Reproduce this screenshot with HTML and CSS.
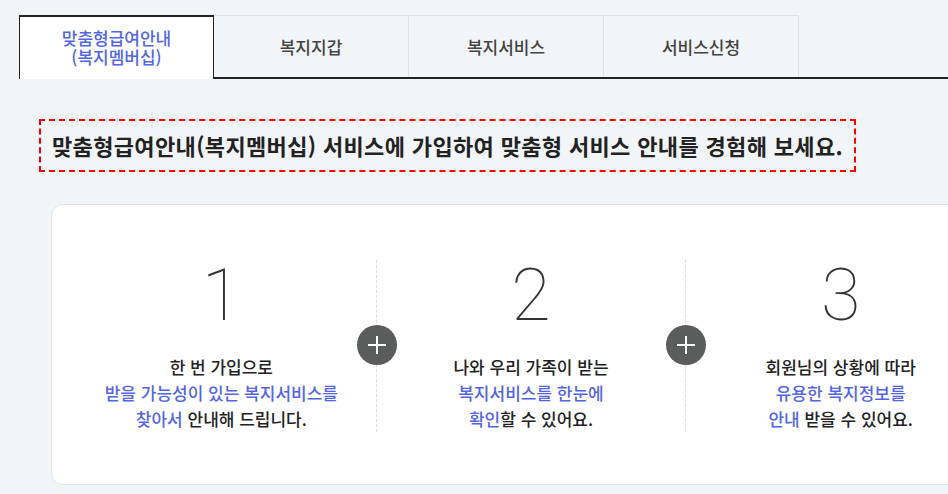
FILE: index.html
```html
<!DOCTYPE html>
<html lang="ko">

<head>
    <meta name="viewport" content="width=device-width, initial-scale=1.0">
    <title>맞춤형급여안내</title>
    <link rel="stylesheet" href="styles.css">
</head>
<body>

    <!-- Tabs -->
    <ul class="tabs">
        <li class="tab active"><a href="#">맞춤형급여안내<br>(복지멤버십)</a></li>
        <li class="tab"><a href="#">복지지갑</a></li>
        <li class="tab"><a href="#">복지서비스</a></li>
        <li class="tab"><a href="#">서비스신청</a></li>
    </ul>

    <!-- Title -->
    <h2 class="title">맞춤형급여안내(복지멤버십) 서비스에 가입하여 맞춤형 서비스 안내를 경험해 보세요.</h2>

    <!-- Steps -->
    <div class="card">
        <div class="step">
            <p class="num">1</p>
            <p class="desc">한 번 가입으로<br><em>받을 가능성이 있는 복지서비스를</em><br><em>찾아서</em> 안내해 드립니다.</p>
            <span class="plus"></span>
        </div>
        <div class="step">
            <p class="num">2</p>
            <p class="desc">나와 우리 가족이 받는<br><em>복지서비스를 한눈에</em><br><em>확인</em>할 수 있어요.</p>
            <span class="plus"></span>
        </div>
        <div class="step">
            <p class="num">3</p>
            <p class="desc">회원님의 상황에 따라<br><em>유용한 복지정보를</em><br><em>안내</em> 받을 수 있어요.</p>
        </div>
    </div>

</body>

</html>
```

FILE: styles.css
```css
/* General */
body {
    margin: 0;
    background-color: #f2f5f7;
    font-family: "Noto Sans CJK KR", "Noto Sans", sans-serif;
    color: #222;
    overflow: hidden;
}

/* Tabs */
.tabs {
    display: flex;
    list-style: none;
    margin: 15px 0 0 19px;
    padding: 0;
    border-bottom: 2px solid #222;
}

.tab {
    width: 195px;
    height: 62px;
    box-sizing: border-box;
    border-top: 1px solid #dde1e4;
    border-right: 1px solid #dde1e4;
    display: flex;
    align-items: center;
    justify-content: center;
    text-align: center;
}

.tab a {
    color: #444;
    text-decoration: none;
    font-size: 17px;
    font-weight: 500;
    line-height: 20px;
}

.tab.active {
    height: 64px;
    margin-bottom: -2px;
    background-color: #fff;
    border: 1px solid #222;
    border-top-width: 2px;
    border-bottom: none;
    padding-bottom: 2px;
}

.tab.active a {
    color: #5266e4;
    line-height: 19px;
}

/* Title */
.title {
    display: inline-block;
    margin: 40px 0 0 39px;
    padding: 0 11px;
    border: 2px dashed #ff0000;
    font-size: 22px;
    font-weight: 700;
    letter-spacing: 0.35px;
    line-height: 49px;
    color: #222;
    white-space: nowrap;
}

/* Card */
.card {
    display: flex;
    width: 960px;
    box-sizing: border-box;
    margin: 32px 0 0 51px;
    padding: 55px 15px 52px;
    background-color: #fff;
    border: 1px solid #e1e4e6;
    border-radius: 12px;
}

.step {
    position: relative;
    width: 310px;
    text-align: center;
}

.step + .step {
    border-left: 1px dashed #dcdcdc;
}

.num {
    margin: 0;
    font-family: Roboto, "Liberation Sans", sans-serif;
    font-weight: 100;
    font-size: 72px;
    line-height: 72px;
    color: #333;
}

.desc {
    margin: 22px 0 0;
    font-size: 17px;
    font-weight: 500;
    line-height: 26px;
    color: #222;
}

.desc em {
    font-style: normal;
    color: #5266e4;
}

/* Plus badge */
.plus {
    position: absolute;
    top: 65px;
    right: -21px;
    width: 40px;
    height: 40px;
    border-radius: 50%;
    background-color: #5b5d5c;
    z-index: 1;
}

.plus::before,
.plus::after {
    content: "";
    position: absolute;
    left: 11px;
    top: 19px;
    width: 18px;
    height: 2px;
    background-color: #fff;
}

.plus::after {
    transform: rotate(90deg);
}
```
